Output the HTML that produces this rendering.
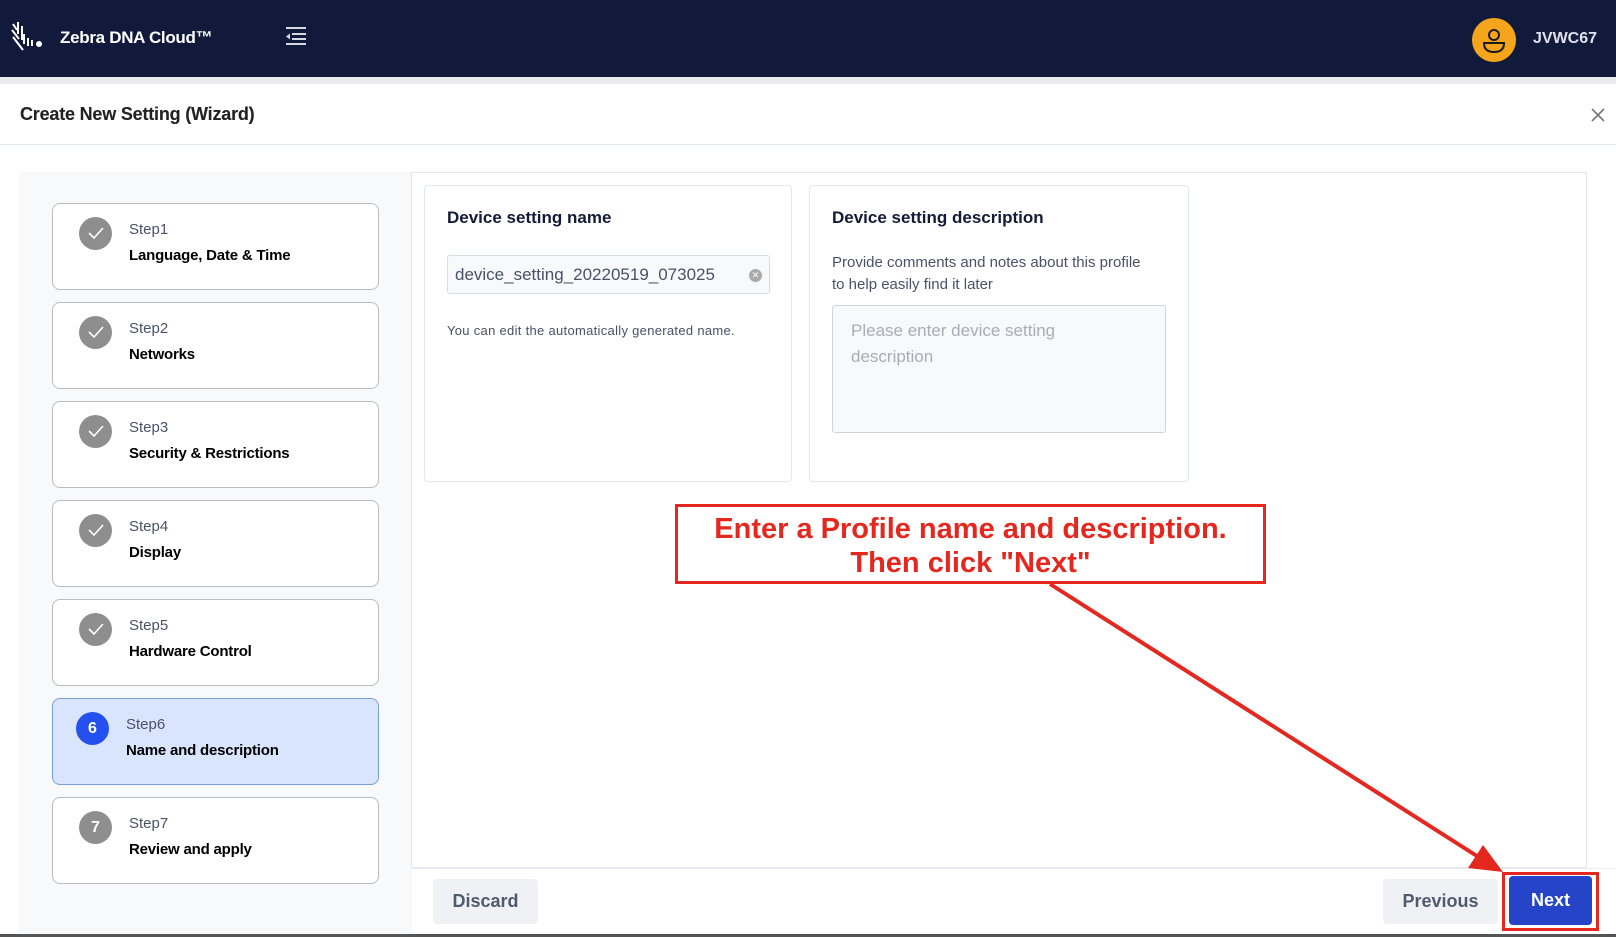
<!DOCTYPE html>
<html><head><meta charset="utf-8"><style>
*{box-sizing:border-box;margin:0;padding:0}
body{width:1616px;height:937px;overflow:hidden;background:#fff;font-family:"Liberation Sans",Arial,sans-serif;position:relative}
.abs{position:absolute}
.hdr{left:0;top:0;width:1616px;height:77px;background:#121a3c}
.step{position:absolute;left:52px;width:327px;height:87px;border:1px solid #b9bcc2;border-radius:8px;background:#fff}
.step .c{position:absolute;left:26px;top:13px;width:33px;height:33px;border-radius:50%;background:#8e8e8e;color:#fff;font-weight:bold;font-size:16px;text-align:center;line-height:33px}
.step .c svg{position:absolute;left:8px;top:9px}
.step .s{position:absolute;left:76px;top:17px;font-size:15px;color:#4a5268}
.step .n{position:absolute;left:76px;top:43px;font-size:15px;font-weight:bold;color:#000;letter-spacing:-0.2px}
.card{position:absolute;top:185px;height:297px;border:1px solid #e3e7ee;border-radius:4px;background:#fff}
.btn{position:absolute;top:879px;height:45px;border-radius:4px;background:#eff1f5;color:#505a6e;font-weight:bold;font-size:18px;text-align:center;line-height:45px}
</style></head><body>
<div class="abs hdr"></div>
<svg class="abs" style="left:10px;top:20px" width="36" height="34" viewBox="0 0 36 34"><g stroke="#fff" stroke-width="2" fill="none"><path d="M3 4l4 6M2 10l7 9M3 17l10 13M8 2v12M12 6v14M14 14v10M18 18v8M22 20v6"/></g><circle cx="29" cy="24" r="3" fill="#fff"/></svg>
<div class="abs" style="left:60px;top:28px;color:#fff;font-weight:bold;font-size:17px;letter-spacing:-0.3px">Zebra DNA Cloud™</div>
<svg class="abs" style="left:285px;top:26px" width="22" height="20" viewBox="0 0 22 20"><g stroke="#d6d9e2" stroke-width="2"><path d="M1 2h20M7 8h14M7 13h14M1 18h20"/></g><path d="M1 10.5l4-3v6z" fill="#d6d9e2"/></svg>
<div class="abs" style="left:1472px;top:18px;width:44px;height:44px;border-radius:50%;background:#f5a51b"></div>
<svg class="abs" style="left:1472px;top:18px" width="44" height="44" viewBox="0 0 44 44"><g stroke="#1a1a1a" stroke-width="2" fill="none"><circle cx="22" cy="17" r="5"/><path d="M12 25h20q0 9-10 9t-10-9z"/></g></svg>
<div class="abs" style="left:1533px;top:30px;color:#dfe2ea;font-weight:bold;font-size:16px">JVWC67</div>
<div class="abs" style="left:0;top:77px;width:1616px;height:7px;background:#e9ebef"></div>
<div class="abs" style="left:20px;top:104px;font-size:18px;color:#222;font-weight:bold;-webkit-text-stroke:0.1px;letter-spacing:-0.2px;font-weight:600">Create New Setting (Wizard)</div>
<svg class="abs" style="left:1590px;top:107px" width="16" height="16" viewBox="0 0 16 16"><path d="M2 2l12 12M14 2L2 14" stroke="#777" stroke-width="1.6"/></svg>
<div class="abs" style="left:0;top:144px;width:1616px;height:1px;background:#e3e8f0"></div>
<div class="abs" style="left:19px;top:172px;width:393px;height:762px;background:#f8f9fb"></div>
<div class="abs" style="left:411px;top:172px;width:1176px;height:696px;border:1px solid #e3e6ea;background:#fff"></div>
<div class="abs" style="left:412px;top:868px;width:1204px;height:66px;background:#fff;border-top:1px solid #e8ebf3"></div>

<div class="step" style="top:203px"><div class="c"><svg width="17" height="14"><path d="M2 7l5 5 9-10" stroke="#fff" stroke-width="1.6" fill="none"/></svg></div><div class="s">Step1</div><div class="n">Language, Date &amp; Time</div></div>
<div class="step" style="top:302px"><div class="c"><svg width="17" height="14"><path d="M2 7l5 5 9-10" stroke="#fff" stroke-width="1.6" fill="none"/></svg></div><div class="s">Step2</div><div class="n">Networks</div></div>
<div class="step" style="top:401px"><div class="c"><svg width="17" height="14"><path d="M2 7l5 5 9-10" stroke="#fff" stroke-width="1.6" fill="none"/></svg></div><div class="s">Step3</div><div class="n">Security &amp; Restrictions</div></div>
<div class="step" style="top:500px"><div class="c"><svg width="17" height="14"><path d="M2 7l5 5 9-10" stroke="#fff" stroke-width="1.6" fill="none"/></svg></div><div class="s">Step4</div><div class="n">Display</div></div>
<div class="step" style="top:599px"><div class="c"><svg width="17" height="14"><path d="M2 7l5 5 9-10" stroke="#fff" stroke-width="1.6" fill="none"/></svg></div><div class="s">Step5</div><div class="n">Hardware Control</div></div>
<div class="step" style="top:698px;background:#d9e5fd;border-color:#7a9de0"><div class="c" style="background:#2550f0;left:23px">6</div><div class="s" style="left:73px">Step6</div><div class="n" style="left:73px">Name and description</div></div>
<div class="step" style="top:797px"><div class="c">7</div><div class="s">Step7</div><div class="n">Review and apply</div></div>

<div class="card" style="left:424px;width:368px">
<div class="abs" style="left:22px;top:22px;font-size:17px;font-weight:bold;color:#141b38">Device setting name</div>
<div class="abs" style="left:22px;top:69px;width:323px;height:39px;border:1px solid #d8dce3;border-radius:3px;background:#f8f9fb;font-size:17px;color:#4a5268;padding:9px 0 0 7px">device_setting_20220519_073025</div>
<div class="abs" style="left:324px;top:83px;width:13px;height:13px;border-radius:50%;background:#aaa;color:#fff;font-size:9px;text-align:center;line-height:13px">✕</div>
<div class="abs" style="left:22px;top:137px;font-size:13px;color:#4a5268;letter-spacing:0.3px">You can edit the automatically generated name.</div>
</div>
<div class="card" style="left:809px;width:380px">
<div class="abs" style="left:22px;top:22px;font-size:17px;font-weight:bold;color:#141b38">Device setting description</div>
<div class="abs" style="left:22px;top:66px;font-size:15px;color:#4a5268;line-height:22px">Provide comments and notes about this profile<br>to help easily find it later</div>
<div class="abs" style="left:22px;top:119px;width:334px;height:128px;border:1px solid #cfd4dc;border-radius:3px;background:#f8f9fb;font-size:17px;color:#a8adb8;padding:12px 18px;line-height:26px">Please enter device setting<br>description</div>
</div>

<div class="abs" style="left:675px;top:504px;width:591px;height:80px;border:3px solid #e5281f;background:#fff;color:#e5281f;font-weight:bold;font-size:29px;text-align:center;line-height:34px;padding-top:5px">Enter a Profile name and description.<br>Then click "Next"</div>
<svg class="abs" style="left:0;top:0" width="1616" height="937"><line x1="1050" y1="584" x2="1480" y2="858" stroke="#e5281f" stroke-width="4"/><path d="M1503 872L1468 868L1483 845z" fill="#e5281f"/></svg>

<div class="btn" style="left:433px;width:105px">Discard</div>
<div class="btn" style="left:1383px;width:115px">Previous</div>
<div class="abs" style="left:1502px;top:872px;width:97px;height:59px;border:3px solid #e5281f"></div>
<div class="btn" style="left:1509px;width:83px;background:#2544c8;color:#fff;top:876px;height:49px;line-height:49px">Next</div>
<div class="abs" style="left:0;top:934px;width:1616px;height:3px;background:#555"></div>
</body></html>
